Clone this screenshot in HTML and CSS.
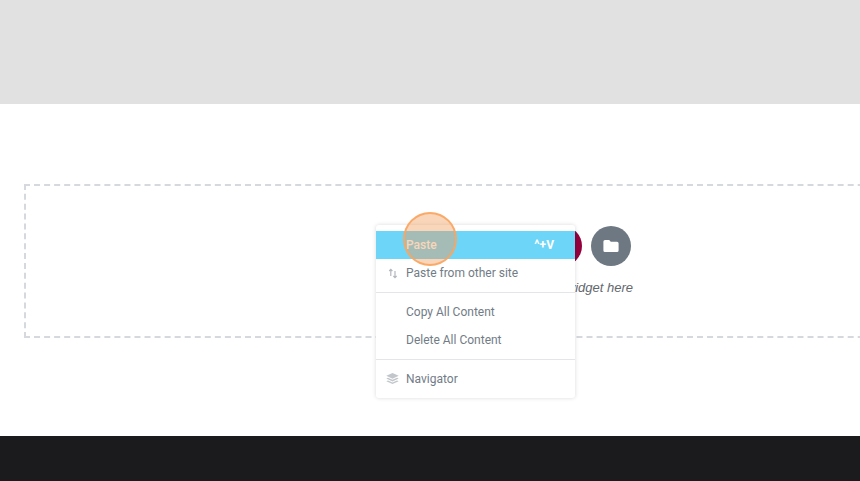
FILE: index.html
```html
<!DOCTYPE html>
<html lang="en">
<head>
<meta charset="utf-8">
<title>Editor</title>
<link rel="stylesheet" href="styles.css">
</head>
<body>
<div class="page">
  <header class="top"></header>
  <main class="content">
    <section class="drop">
      <div class="buttons">
        <span class="round maroon"></span>
        <span class="round folder">
          <svg width="16" height="14" viewBox="0 0 16 14"><path fill="#fff" d="M2 1h4.200l1.600 1.700H14a1.600 1.600 0 0 1 1.600 1.600v7.100a1.600 1.600 0 0 1-1.600 1.600H2A1.600 1.600 0 0 1 .4 11.400V2.600A1.600 1.600 0 0 1 2 1z"/></svg>
        </span>
      </div>
      <p class="hint">Drag widget here</p>
    </section>
  </main>
  <footer class="bottom"></footer>

  <nav class="menu">
    <div class="group">
      <div class="item active"><span class="ico"></span><span class="label">Paste</span><span class="key">^+V</span></div>
      <div class="item">
        <span class="ico"><svg width="10" height="11" viewBox="0 0 10 11"><path fill="none" stroke="#b4b8bd" stroke-width="1.200" d="M2.800 8V1.500M1.200 3l1.600-1.700L4.400 3M7 3v6.500M5.400 8l1.600 1.700L8.600 8"/></svg></span>
        <span class="label">Paste from other site</span>
      </div>
    </div>
    <div class="group">
      <div class="item"><span class="ico"></span><span class="label">Copy All Content</span></div>
      <div class="item"><span class="ico"></span><span class="label">Delete All Content</span></div>
    </div>
    <div class="group">
      <div class="item">
        <span class="ico"><svg width="13" height="12" viewBox="0 0 13 12"><path fill="#c3c7cb" d="M6.500 0l6.200 2.800-6.200 2.900L.3 2.800z"/><path fill="#c3c7cb" d="M2 4.700l4.500 2.100L11 4.700l1.700.8-6.200 2.900L.3 5.500z"/><path fill="#c3c7cb" d="M2 7.400l4.500 2.100L11 7.400l1.700.8-6.200 2.900L.3 8.200z"/></svg></span>
        <span class="label">Navigator</span>
      </div>
    </div>
  </nav>
  <div class="pointer"></div>
</div>
</body>
</html>
```

FILE: styles.css
```css
* { box-sizing: border-box; }
html, body { margin: 0; padding: 0; }
body { font-family: Roboto, "Liberation Sans", sans-serif; background: #fff; overflow: hidden; }
.page { position: relative; width: 860px; height: 481px; overflow: hidden; display: flex; flex-direction: column; }
.top { height: 104px; background: #e1e1e1; flex: none; }
.content { height: 332px; flex: none; padding: 80px 0 0 24px; background: #fff; }
.bottom { height: 45px; flex: none; background: #1b1b1d; }
.drop {
  width: 900px; height: 154px;
  border: 2px dashed #d5d8dc;
  display: flex; flex-direction: column; align-items: flex-start;
  padding: 40px 0 0 516px;
}
.buttons { display: flex; gap: 9px; }
.round { width: 40px; height: 40px; border-radius: 50%; display: flex; align-items: center; justify-content: center; }
.maroon { background: #93003c; }
.folder { background: #6d7882; }
.hint { margin: 13px 0 0 -32px; font-family: "Liberation Sans", sans-serif; font-size: 13px; line-height: 18px; font-style: italic; color: #63686e; white-space: nowrap; width: 123px; text-align: right; }
.menu {
  position: absolute; left: 376px; top: 225px; width: 199px; height: 173px;
  background: #fff; border-radius: 3px;
  box-shadow: 0 0 4px rgba(0,0,0,.15);
  padding-top: 6px;
  font-size: 12px; color: #727c86;
}
.group { border-bottom: 1px solid #e3e5e8; padding-bottom: 5px; margin-bottom: 5px; }
.group:last-child { border-bottom: 0; margin-bottom: 0; padding-bottom: 0; }
.item { height: 28px; display: flex; align-items: center; padding: 0 21px 0 0; }
.ico { width: 30px; flex: none; display: flex; align-items: center; justify-content: center; padding-left: 3px; }
.label { flex: 1; }
.active { background: #6dd5f7; color: #fff; font-weight: 500; }
.key { font-weight: 700; font-size: 12px; }
.pointer {
  position: absolute; left: 403px; top: 212px; width: 54px; height: 54px;
  border-radius: 50%;
  background: rgba(240,155,90,.42);
  border: 2px solid rgba(250,165,95,.9);
}
```
